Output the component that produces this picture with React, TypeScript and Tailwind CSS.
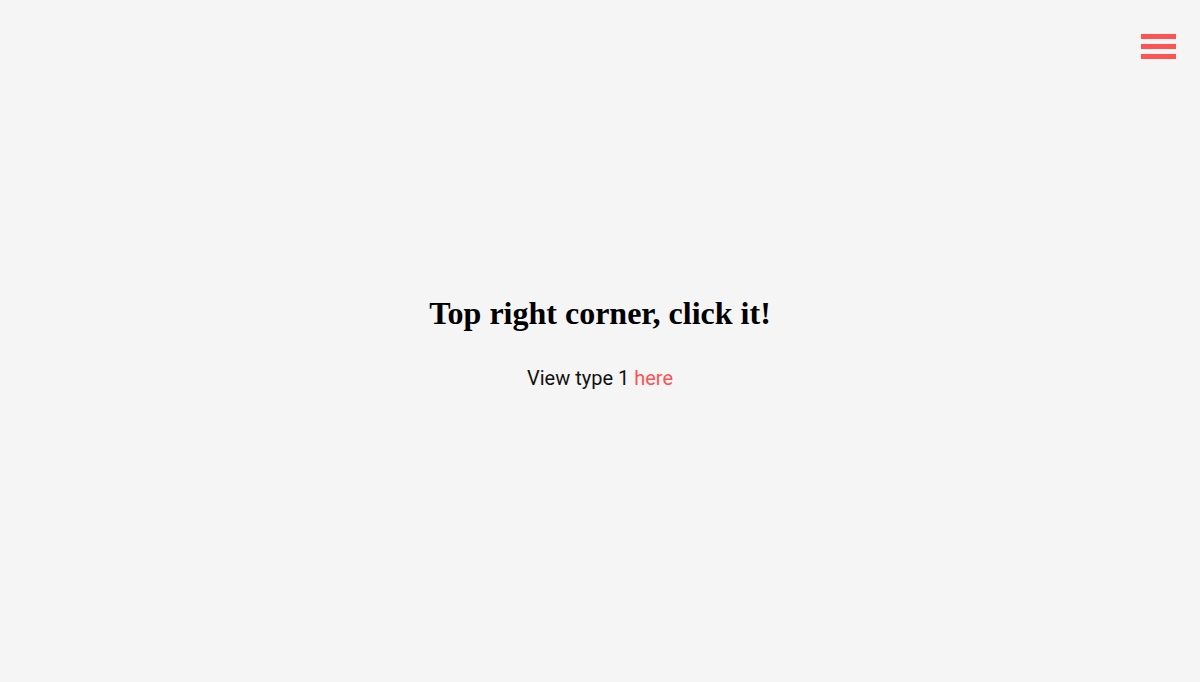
export default function App() {
  return (
    <div className="relative flex h-[682px] w-full flex-col items-center justify-center bg-[#f5f5f5] font-['Roboto',sans-serif]">
      <button aria-label="Open menu" className="absolute right-[24px] top-[34px] flex w-[35px] flex-col gap-[5px]">
        <span className="block h-[5px] w-full bg-[#ff5252]" />
        <span className="block h-[5px] w-full bg-[#ff5252]" />
        <span className="block h-[5px] w-full bg-[#ff5252]" />
      </button>
      <h1 className="mt-[2px] font-['Liberation_Serif',serif] text-[32px] font-bold leading-none text-black">
        Top right corner, click it!
      </h1>
      <p className="mt-[39px] text-[20px] leading-none text-[#111]">
        View type 1 <a href="#" className="text-[#ff5252]">here</a>
      </p>
    </div>
  )
}
